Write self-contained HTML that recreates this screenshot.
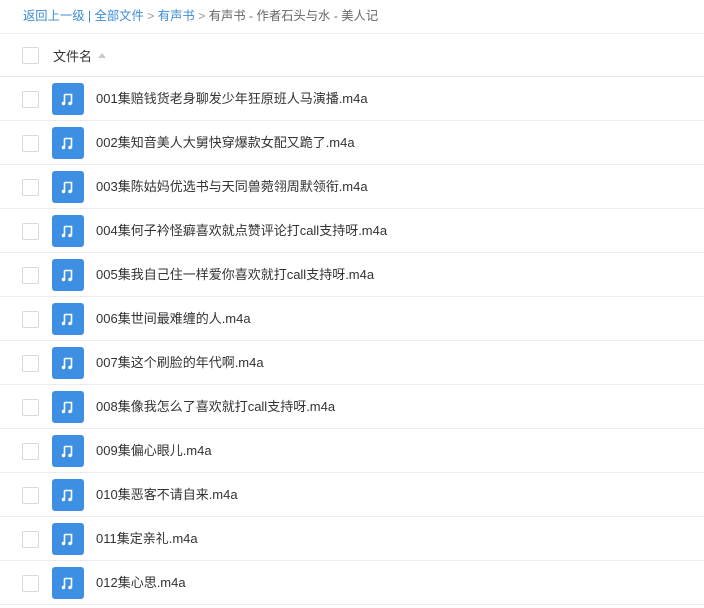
<!DOCTYPE html>
<html><head><meta charset="utf-8"><style>
body{margin:0;width:704px;height:608px;overflow:hidden;background:#fff;font-family:"Liberation Sans","Noto Sans CJK SC",sans-serif;}
.bc{position:absolute;left:23px;top:8px;font-size:12.3px;color:#666;line-height:16px;}
.bc a{color:#3b8cd4;text-decoration:none}
.bc .g{color:#999}
.hdr{position:absolute;left:0;top:33px;width:704px;height:44px;border-top:1px solid #f2f2f2;border-bottom:1px solid #e8e8e8;box-sizing:border-box}
.cb{position:absolute;left:22px;width:15px;height:15px;border:1px solid #d9d9d9;border-radius:2px;background:#fff}
.row{position:absolute;left:0;width:704px;height:44px;border-bottom:1px solid #ececec;box-sizing:border-box}
.ic{position:absolute;left:52px;top:6px;width:32px;height:32px;background:#3d8fe4;border-radius:3px}
.nm{position:absolute;left:96px;top:13px;font-size:13px;color:#333;line-height:18px}
</style></head><body>
<div class="bc"><a>返回上一级</a> <span style="color:#3b8cd4">|</span> <a>全部文件</a> <span class="g">&gt;</span> <a>有声书</a> <span class="g">&gt;</span> 有声书 - 作者石头与水 - 美人记</div>
<div class="hdr"><div class="cb" style="top:13px"></div><div style="position:absolute;left:53px;top:12px;font-size:13px;color:#333">文件名</div><div style="position:absolute;left:98px;top:19px;width:0;height:0;border-left:4px solid transparent;border-right:4px solid transparent;border-bottom:5px solid #c8c8c8"></div></div>
<div id="rows"></div>
<script>
var n=["001集赔钱货老身聊发少年狂原班人马演播.m4a","002集知音美人大舅快穿爆款女配又跪了.m4a","003集陈姑妈优选书与天同兽菀翎周默领衔.m4a","004集何子衿怪癖喜欢就点赞评论打call支持呀.m4a","005集我自己住一样爱你喜欢就打call支持呀.m4a","006集世间最难缠的人.m4a","007集这个刷脸的年代啊.m4a","008集像我怎么了喜欢就打call支持呀.m4a","009集偏心眼儿.m4a","010集恶客不请自来.m4a","011集定亲礼.m4a","012集心思.m4a"];
var h="";n.forEach(function(t,i){var y=77+i*44;h+='<div class="row" style="top:'+y+'px"><div class="cb" style="top:14px"></div><div class="ic"><svg width="32" height="32" viewBox="0 0 32 32"><path d="M12.5 11.5h7v9" stroke="#fff" stroke-width="1.6" fill="none"/><circle cx="11.5" cy="20.5" r="1.8" fill="#fff"/><circle cx="18" cy="20.5" r="1.8" fill="#fff"/><path d="M12.5 11.5v9" stroke="#fff" stroke-width="1.6"/></svg></div><div class="nm">'+t+'</div></div>'});
document.getElementById("rows").innerHTML=h;
</script>
</body></html>
